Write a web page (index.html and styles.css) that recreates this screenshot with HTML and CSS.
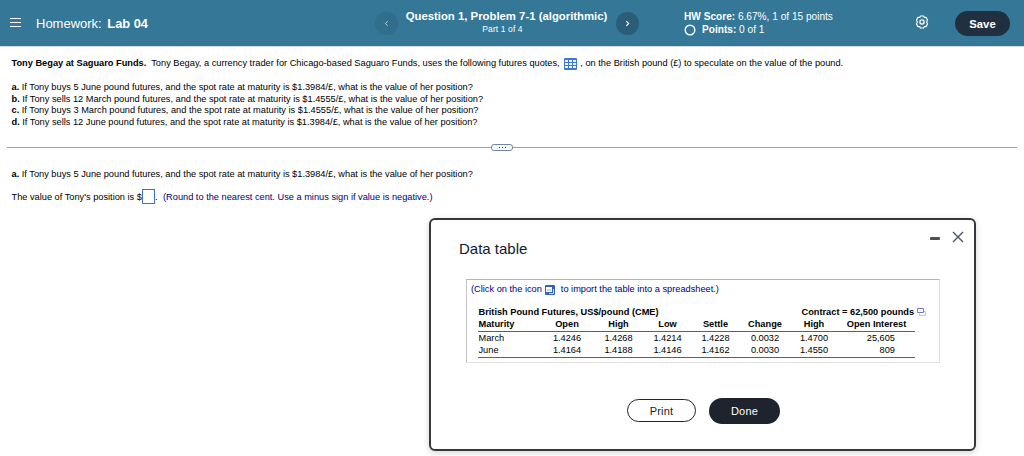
FILE: index.html
```html
<!DOCTYPE html>
<html lang="en">
<head>
    <meta charset="UTF-8">
    <title>Homework: Lab 04</title>
    <link rel="stylesheet" href="styles.css">
</head>
<body>

<header class="topbar">
    <svg class="menu-icon" width="12" height="10" viewBox="0 0 12 10">
        <path d="M0 .5h11M0 4.500h11M0 8.500h11" stroke="#fff" stroke-width="1"/>
    </svg>
    <div class="course">Homework: <b>Lab 04</b></div>
    <button class="nav-btn prev">
        <svg width="5" height="7" viewBox="0 0 5 7"><path d="M3.6 1.2 1.4 3.5l2.2 2.3" fill="none" stroke="#b9d0dc"/></svg>
    </button>
    <div class="question">
        <div class="question-title">Question 1, Problem 7-1 (algorithmic)</div>
        <div class="question-part">Part 1 of 4</div>
    </div>
    <button class="nav-btn next">
        <svg width="5" height="7" viewBox="0 0 5 7"><path d="M1.4 1.2 3.6 3.5 1.4 5.8" fill="none" stroke="#fff" stroke-width="1.2"/></svg>
    </button>
    <div class="score">
        <div class="score-line"><b>HW Score:</b> 6.67%, 1 of 15 points</div>
        <div class="points">
            <svg class="circle" width="12" height="12" viewBox="0 0 12 12"><circle cx="6" cy="6" r="4.800" fill="none" stroke="#fff" stroke-width="1.400"/></svg>
            <span><b>Points:</b> 0 of 1</span>
        </div>
    </div>
    <svg class="gear" width="14" height="14" viewBox="0 0 14 14" fill="none" stroke="#fff">
        <path d="M5.400 1h3.200l.7 1.500 1.700-.1 1.600 2.700-1 1.900 1 1.900-1.600 2.700-1.700-.1L8.600 13H5.400l-.7-1.500-1.700.1L1.400 8.900l1-1.900-1-1.900L3 2.400l1.700.1z" stroke-width="1.100" stroke-linejoin="round"/>
        <circle cx="7" cy="7" r="2.100" stroke-width="1.300"/>
    </svg>
    <button class="save">Save</button>
</header>

<main class="content">
    <p class="intro"><b>Tony Begay at Saguaro Funds.</b>&nbsp; Tony Begay, a currency trader for Chicago-based Saguaro Funds, uses the following futures quotes,
        <svg class="grid-icon" width="13" height="12" viewBox="0 0 13 12">
            <rect width="13" height="12" rx="1" fill="#3f78d0"/>
            <path d="M1 2h3v2H1zM5 2h3v2H5zM9 2h3v2H9zM1 5h3v2H1zM5 5h3v2H5zM9 5h3v2H9zM1 8h3v2H1zM5 8h3v2H5zM9 8h3v2H9z" fill="#eef4ff"/>
        </svg>
        , on the British pound (£) to speculate on the value of the pound.</p>

    <div class="parts">
        <div><b>a.</b> If Tony buys 5 June pound futures, and the spot rate at maturity is $1.3984/£, what is the value of her position?</div>
        <div><b>b.</b> If Tony sells 12 March pound futures, and the spot rate at maturity is $1.4555/£, what is the value of her position?</div>
        <div><b>c.</b> If Tony buys 3 March pound futures, and the spot rate at maturity is $1.4555/£, what is the value of her position?</div>
        <div><b>d.</b> If Tony sells 12 June pound futures, and the spot rate at maturity is $1.3984/£, what is the value of her position?</div>
    </div>

    <div class="divider">
        <span class="line"></span>
        <span class="handle"><i></i><i></i><i></i></span>
        <span class="line"></span>
    </div>

    <p class="current"><b>a.</b> If Tony buys 5 June pound futures, and the spot rate at maturity is $1.3984/£, what is the value of her position?</p>
    <div class="answer">
        <span>The value of Tony's position is $</span>
        <input class="answer-input" type="text">
        <span>.</span>
        <span class="hint">(Round to the nearest cent. Use a minus sign if value is negative.)</span>
    </div>
</main>

<!-- Data table popup -->
<div class="dialog">
    <div class="dialog-head">
        <h2 class="dialog-title">Data table</h2>
        <span class="minimize"></span>
        <svg class="close" width="12" height="12" viewBox="0 0 12 12"><path d="M1 1l10 10M11 1 1 11" stroke="#465468" stroke-width="1.400"/></svg>
    </div>

    <div class="panel">
        <div class="import">
            <span>(Click on the icon</span>
            <svg width="10" height="10" viewBox="0 0 10 10">
                <rect width="10" height="10" rx="1" fill="#2f62c4"/>
                <path d="M1 2h6v5H1z" fill="#fff"/>
                <path d="M8.500 4v4.500H4" fill="none" stroke="#d5e0f7"/>
                <path d="M2 4h4v2H2z" fill="#c3d1ee"/>
            </svg>
            <span>to import the table into a spreadsheet.)</span>
        </div>
        <div class="caption">
            <span>British Pound Futures, US$/pound (CME)</span>
            <span class="contract">Contract = 62,500 pounds</span>
            <svg width="9" height="8" viewBox="0 0 9 8" fill="none">
                <path d="M2.500 5.500v2h6v-4h-2" stroke="#bcc5e6"/>
                <path d="M.5.500h6v4h-6z" stroke="#6d80c6" fill="#fff"/>
            </svg>
        </div>
        <table class="quotes">
            <colgroup>
                <col class="c-maturity"><col class="c-open"><col class="c-high"><col class="c-low">
                <col class="c-settle"><col class="c-change"><col class="c-high2"><col class="c-interest">
            </colgroup>
            <thead>
                <tr><th>Maturity</th><th>Open</th><th>High</th><th>Low</th><th>Settle</th><th>Change</th><th>High</th><th>Open Interest</th></tr>
            </thead>
            <tbody>
                <tr><td>March</td><td>1.4246</td><td>1.4268</td><td>1.4214</td><td>1.4228</td><td>0.0032</td><td>1.4700</td><td>25,605</td></tr>
                <tr><td>June</td><td>1.4164</td><td>1.4188</td><td>1.4146</td><td>1.4162</td><td>0.0030</td><td>1.4550</td><td>809</td></tr>
            </tbody>
        </table>
    </div>

    <div class="dialog-actions">
        <button class="print">Print</button>
        <button class="done">Done</button>
    </div>
</div>

</body>
</html>
```
FILE: styles.css
```css
* {
    box-sizing: border-box;
}
body {
    margin: 0;
    height: 456px;
    overflow: hidden;
    background: #fff;
    color: #000;
    font-family: "Liberation Sans", Arial, sans-serif;
    font-size: 9.24px;
    white-space: nowrap;
}
p {
    margin: 0;
}
button {
    padding: 0;
    border: 0;
    font-family: inherit;
}
svg {
    flex: none;
    display: block;
}

/* top bar */
.topbar {
    display: flex;
    align-items: flex-start;
    height: 47px;
    padding-left: 10px;
    background: #347797;
    border-bottom: 1px solid #d5d9ea;
    color: #fff;
}
.menu-icon {
    margin-top: 18px;
}
.course {
    width: 338px;
    margin-left: 14px;
    padding-top: 15px;
    font-size: 13px;
    line-height: 17px;
}
.course b {
    margin-left: 2px;
    font-size: 12.8px;
}
.nav-btn {
    display: flex;
    align-items: center;
    justify-content: center;
    width: 23px;
    height: 23px;
    margin-top: 12px;
    border-radius: 50%;
}
.prev {
    margin-left: 1px;
    background: #306e8c;
}
.next {
    background: #2b5c78;
}
.question {
    width: 218px;
    padding-top: 9px;
    text-align: center;
}
.question-title {
    padding-right: 1px;
    font-size: 11.35px;
    font-weight: bold;
    line-height: 14px;
}
.question-part {
    padding-right: 9px;
    font-size: 8.5px;
    line-height: 13px;
    letter-spacing: 0.1px;
}
.score {
    width: 231px;
    margin-left: 45px;
    padding-top: 10px;
    font-size: 10.12px;
    line-height: 13px;
}
.points {
    display: flex;
}
.circle {
    margin: 1px 6px 0 0;
}
.gear {
    margin-top: 15px;
}
.save {
    width: 55px;
    height: 25px;
    margin: 11px 0 0 26px;
    border-radius: 13px;
    background: #203040;
    color: #fff;
    font-size: 11.3px;
    font-weight: bold;
}

/* question text */
.content {
    padding: 10px 7px 0;
}
.intro {
    height: 14px;
    padding-left: 4.5px;
    line-height: 12px;
}
.grid-icon {
    display: inline-block;
    margin: 0 1px 0 1.5px;
    vertical-align: -4px;
}
.parts {
    padding: 11px 0 0 4.5px;
    line-height: 11.5px;
}
.divider {
    display: flex;
    align-items: center;
    height: 7px;
    margin-top: 16px;
}
.line {
    flex: 1;
    height: 1px;
    background: #b396a2;
}
.line:first-child {
    flex: none;
    width: 484px;
}
.handle {
    display: flex;
    align-items: center;
    justify-content: center;
    gap: 2px;
    width: 22px;
    height: 7px;
    border: 1px solid #75879a;
    border-radius: 3px;
    background: #f5f8fb;
}
.handle i {
    width: 1px;
    height: 1px;
    background: #2d3a48;
}
.current {
    padding: 17px 0 0 4.5px;
    line-height: 12px;
}
.answer {
    display: flex;
    align-items: center;
    height: 15px;
    margin-top: 9px;
    padding-left: 4.5px;
}
.answer-input {
    width: 13px;
    height: 15px;
    padding: 0;
    border: 1px solid #3f6fd0;
    background: #fff;
}
.hint {
    margin-left: 5.5px;
    color: #00007d;
}

/* popup */
.dialog {
    position: absolute;
    left: 429px;
    top: 218px;
    width: 547px;
    height: 233px;
    border: 2px solid #37373a;
    border-radius: 6px;
    background: #fff;
    box-shadow: 0 2px 6px rgba(60, 40, 50, 0.2);
}
.dialog-head {
    display: flex;
    height: 59px;
    padding-left: 28px;
}
.dialog-title {
    width: 471px;
    margin: 0;
    padding-top: 20px;
    color: #101a33;
    font-size: 15px;
    font-weight: normal;
    line-height: 17px;
}
.minimize {
    width: 10px;
    height: 3px;
    margin-top: 17px;
    border-radius: 1px;
    background: #505052;
}
.close {
    margin: 11px 0 0 12px;
}
.panel {
    width: 474px;
    height: 84px;
    margin-left: 35px;
    padding: 3px 0 0 4px;
    border: 1px solid #e2e2e2;
    border-top-color: #b5b5b5;
    border-left-color: #c6c6c6;
}
.import {
    display: flex;
    align-items: center;
    height: 12px;
    color: #00007d;
}
.import svg {
    margin: 1px 6px 0 3px;
}
.caption {
    display: flex;
    align-items: center;
    height: 13px;
    margin: 10px 0 0 7.5px;
    font-weight: bold;
}
.contract {
    width: 112.5px;
    margin-left: auto;
}
.caption svg {
    margin: 1px 13px 0 3px;
}
.quotes {
    width: 437px;
    margin-left: 7px;
    table-layout: fixed;
    border-collapse: collapse;
    font-size: 9.24px;
    text-align: center;
}
.quotes th,
.quotes td {
    height: 13px;
    padding: 0;
    line-height: 12px;
}
.quotes th:first-child,
.quotes td:first-child {
    padding-left: 0.5px;
    text-align: left;
}
.quotes td:last-child {
    padding-right: 20px;
    text-align: right;
}
.quotes thead,
.quotes tbody {
    border-bottom: 1px solid #606060;
}
.c-maturity { width: 63px; }
.c-open { width: 52px; }
.c-high { width: 51px; }
.c-low { width: 47px; }
.c-settle { width: 49px; }
.c-change { width: 50px; }
.c-high2 { width: 48px; }
.c-interest { width: 77px; }

.dialog-actions {
    display: flex;
    align-items: flex-start;
    gap: 13px;
    margin: 35px 0 0 196px;
}
.print,
.done {
    font-size: 11px;
    letter-spacing: 0.2px;
}
.print {
    width: 69px;
    height: 23px;
    margin-top: 1px;
    border: 1.5px solid #20242f;
    border-radius: 12px;
    background: #fff;
    color: #161c28;
}
.done {
    width: 71px;
    height: 26px;
    border-radius: 13px;
    background: #1f232e;
    color: #fff;
}
```
